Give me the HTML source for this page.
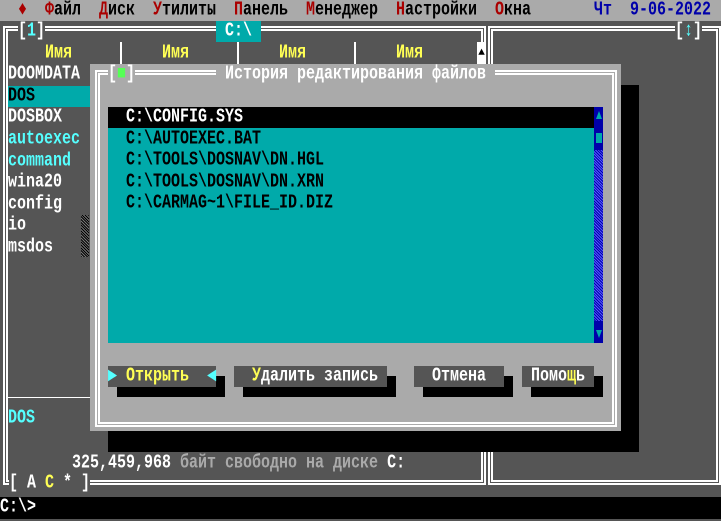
<!DOCTYPE html>
<html><head><meta charset="utf-8">
<style>
*{margin:0;padding:0;box-sizing:border-box}
body{width:721px;height:519px;overflow:hidden;background:#555;position:relative;font-family:"Liberation Mono","DejaVu Sans Mono",monospace;font-weight:bold;font-size:15px}
.a{position:absolute}
.t{position:absolute;white-space:pre;line-height:21px;height:21px;transform:scaleY(1.3);transform-origin:50% 55%}
.w{color:#fff}.k{color:#000}.y{color:#ffff55}.c{color:#55ffff}.r{color:#aa0000}.g{color:#aaa}.b{color:#0000aa}
</style></head><body>
<div class="a" style="left:0;top:0;width:721px;height:21px;background:#aaa"></div>
<div class="t r" style="left:18px;top:0">♦</div>
<div class="t k" style="left:45px;top:0"><span class="r">Ф</span>айл</div>
<div class="t k" style="left:99px;top:0"><span class="r">Д</span>иск</div>
<div class="t k" style="left:153px;top:0"><span class="r">У</span>тилиты</div>
<div class="t k" style="left:234px;top:0"><span class="r">П</span>анель</div>
<div class="t k" style="left:306px;top:0"><span class="r">М</span>енеджер</div>
<div class="t k" style="left:396px;top:0"><span class="r">Н</span>астройки</div>
<div class="t k" style="left:495px;top:0"><span class="r">О</span>кна</div>
<div class="t b" style="left:594px;top:0">Чт  9-06-2022</div>

<div class="a" style="left:3px;top:26px;width:483px;height:459px;border:5px double #fff"></div>
<div class="a" style="left:18px;top:21px;width:27px;height:21px;background:#555"></div>
<div class="t w" style="left:18px;top:21px">[<span class="c">1</span>]</div>
<div class="a" style="left:216px;top:21px;width:45px;height:21px;background:#00aaaa"></div>
<div class="t w" style="left:216px;top:21px"> C:\ </div>
<div class="a" style="left:120px;top:42px;width:2px;height:22px;background:#fff"></div>
<div class="a" style="left:237px;top:42px;width:2px;height:22px;background:#fff"></div>
<div class="a" style="left:354px;top:42px;width:2px;height:22px;background:#fff"></div>
<div class="t y" style="left:45px;top:43px">Имя</div>
<div class="t y" style="left:162px;top:43px">Имя</div>
<div class="t y" style="left:279px;top:43px">Имя</div>
<div class="t y" style="left:396px;top:43px">Имя</div>
<div class="a" style="left:477px;top:42px;width:9px;height:22px;background:#fff;color:#000;font-size:11px;text-align:center;line-height:22px">▲</div>
<div class="t w" style="left:8px;top:64px">DOOMDATA</div>
<div class="a" style="left:8px;top:86px;width:112px;height:21px;background:#00aaaa"></div>
<div class="t k" style="left:8px;top:86px">DOS</div>
<div class="t w" style="left:8px;top:107px">DOSBOX</div>
<div class="t c" style="left:8px;top:129px">autoexec</div>
<div class="t c" style="left:8px;top:151px">command</div>
<div class="t w" style="left:8px;top:172px">wina20</div>
<div class="t w" style="left:8px;top:194px">config</div>
<div class="t w" style="left:8px;top:215px">io</div>
<div class="t w" style="left:8px;top:237px">msdos</div>
<div class="a" style="left:81px;top:215px;width:8px;height:42px;background:repeating-linear-gradient(45deg,#000 0 1px,#777 1px 2px)"></div>
<div class="a" style="left:8px;top:397px;width:100px;height:1px;background:#fff"></div>
<div class="t c" style="left:8px;top:408px">DOS</div>
<div class="t w" style="left:72px;top:453px">325,459,968 <span class="g">байт свободно на диске</span> C:</div>
<div class="a" style="left:9px;top:475px;width:81px;height:18px;background:#555"></div>
<div class="t w" style="left:9px;top:473px">[ A <span class="y">C</span> * ]</div>

<div class="a" style="left:488px;top:26px;width:233px;height:459px;border:5px double #fff"></div>
<div class="a" style="left:675px;top:21px;width:27px;height:21px;background:#555"></div>
<div class="t w" style="left:675px;top:21px">[<span class="c">↕</span>]</div>

<div class="a" style="left:0;top:497px;width:721px;height:22px;background:#000"></div>
<div class="t w" style="left:0;top:497px">C:\&gt;</div>

<div class="a" style="left:108px;top:85px;width:531px;height:367px;background:#000"></div>
<div class="a" style="left:90px;top:64px;width:531px;height:367px;background:#aaa"></div>
<div class="a" style="left:95px;top:70px;width:522px;height:357px;border:5px double #fff"></div>
<div class="a" style="left:108px;top:64px;width:27px;height:21px;background:#aaa"></div>
<div class="t w" style="left:108px;top:64px">[<span style="color:#55ff55">■</span>]</div>
<div class="a" style="left:216px;top:64px;width:279px;height:21px;background:#aaa"></div>
<div class="t w" style="left:216px;top:64px"> История редактирования файлов </div>
<div class="a" style="left:108px;top:107px;width:486px;height:236px;background:#00aaaa"></div>
<div class="a" style="left:108px;top:107px;width:486px;height:21px;background:#000"></div>
<div class="t w" style="left:126px;top:107px">C:\CONFIG.SYS</div>
<div class="t k" style="left:126px;top:129px">C:\AUTOEXEC.BAT</div>
<div class="t k" style="left:126px;top:150px">C:\TOOLS\DOSNAV\DN.HGL</div>
<div class="t k" style="left:126px;top:172px">C:\TOOLS\DOSNAV\DN.XRN</div>
<div class="t k" style="left:126px;top:193px">C:\CARMAG~1\FILE_ID.DIZ</div>
<div class="a" style="left:594px;top:107px;width:9px;height:236px;background:repeating-linear-gradient(45deg,#0000aa 0 1px,#5555ff 1px 2px)"></div>
<div class="a" style="left:594px;top:107px;width:9px;height:43px;background:#0000aa"></div>
<div class="a" style="left:594px;top:321px;width:9px;height:22px;background:#0000aa"></div>
<div class="a" style="left:596px;top:111px;width:0;height:0;border-left:3px solid transparent;border-right:3px solid transparent;border-bottom:8px solid #00aaaa"></div>
<div class="a" style="left:596px;top:133px;width:6px;height:10px;background:#00aaaa"></div>
<div class="a" style="left:596px;top:330px;width:0;height:0;border-left:3px solid transparent;border-right:3px solid transparent;border-top:8px solid #00aaaa"></div>
<div class="a" style="left:117px;top:376px;width:108px;height:21px;background:#000"></div>
<div class="a" style="left:108px;top:366px;width:108px;height:21px;background:#555"></div>
<div class="t c" style="left:108px;top:366px">▶ <span class="y">Открыть</span>  ◀</div>
<div class="a" style="left:243px;top:376px;width:153px;height:21px;background:#000"></div>
<div class="a" style="left:234px;top:366px;width:153px;height:21px;background:#555"></div>
<div class="t w" style="left:252px;top:366px"><span class="y">У</span>далить запись</div>
<div class="a" style="left:423px;top:376px;width:90px;height:21px;background:#000"></div>
<div class="a" style="left:414px;top:366px;width:90px;height:21px;background:#555"></div>
<div class="t w" style="left:432px;top:366px">Отмена</div>
<div class="a" style="left:531px;top:376px;width:72px;height:21px;background:#000"></div>
<div class="a" style="left:522px;top:366px;width:72px;height:21px;background:#555"></div>
<div class="t w" style="left:531px;top:366px">Помо<span class="y">щ</span>ь</div>
</body></html>
